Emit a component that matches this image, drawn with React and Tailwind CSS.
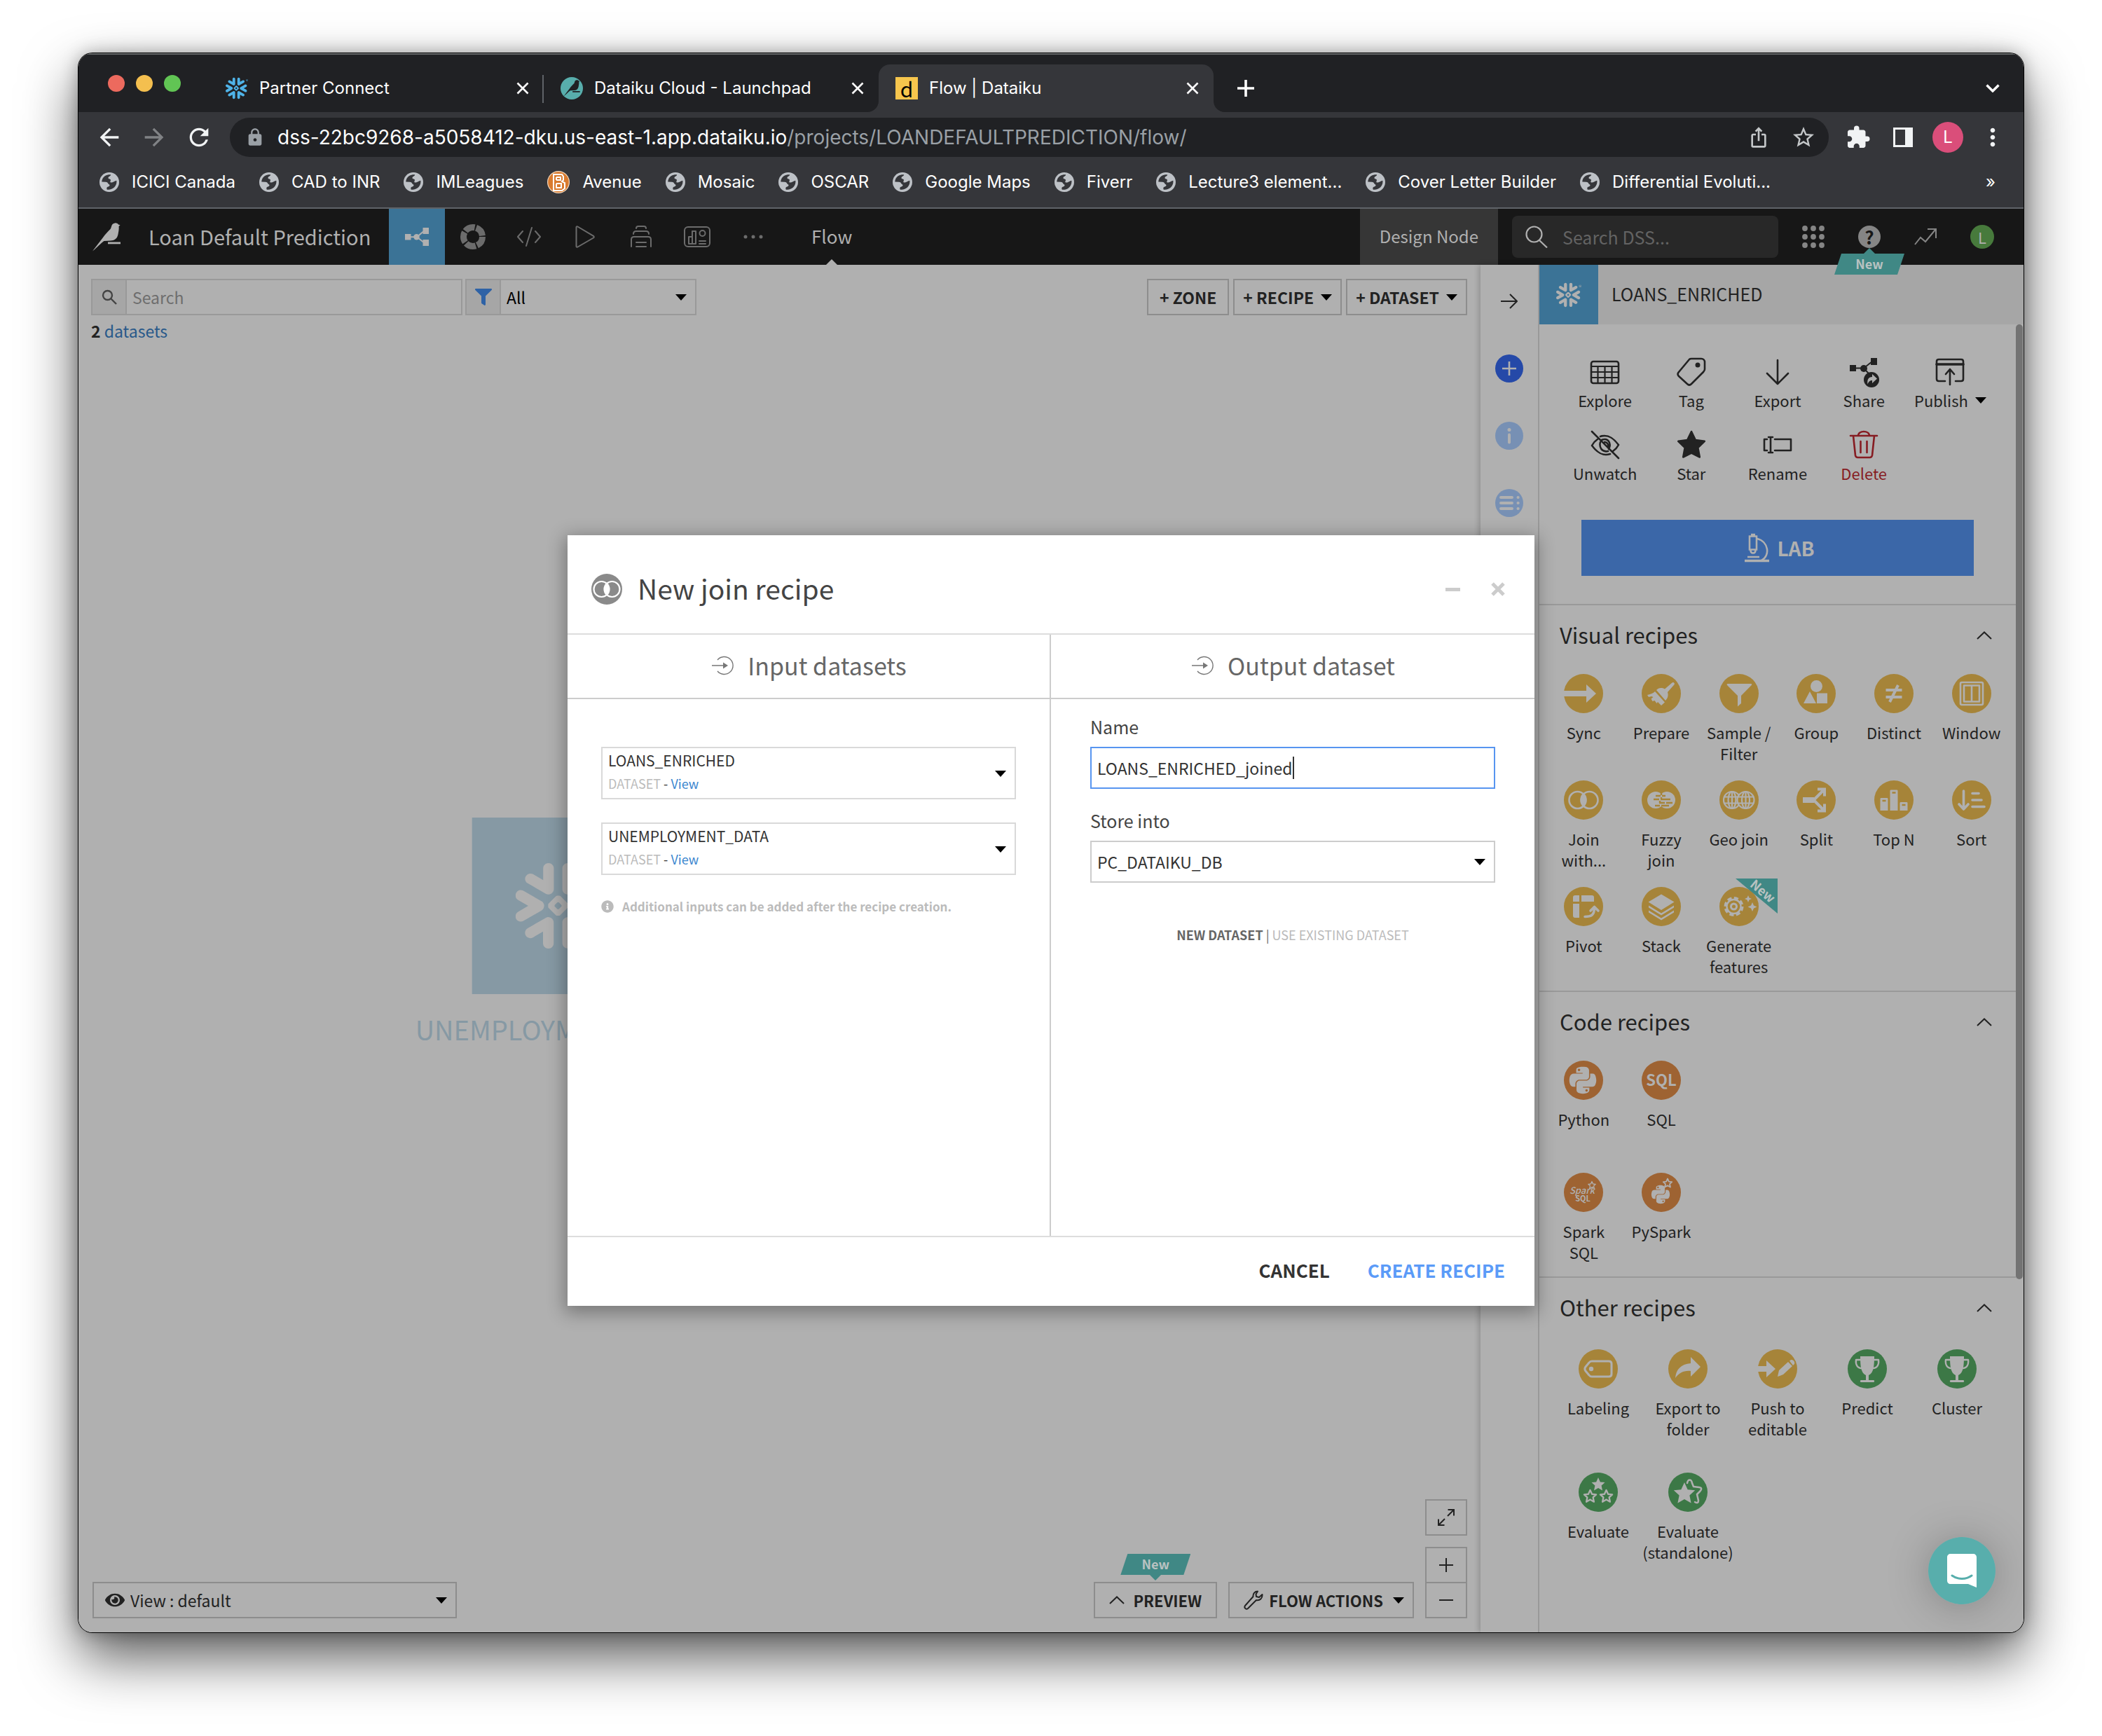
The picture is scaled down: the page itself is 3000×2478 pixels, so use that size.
import React from "react";
import { SiSnowflake } from "react-icons/si";
import { FaPython, FaEye, FaInfoCircle, FaFilter } from "react-icons/fa";
import {
  MdArrowBack,
  MdArrowForward,
  MdRefresh,
  MdLock,
  MdIosShare,
  MdStarBorder,
  MdExtension,
  MdMoreVert,
} from "react-icons/md";

/* ---------- small shared pieces ---------- */

const Caret = ({ className = "" }) => (
  <svg viewBox="0 0 16 9" className={"h-[9px] w-4 shrink-0 fill-black " + className} aria-hidden="true">
    <path d="M0 0h16L8 9z" />
  </svg>
);

const Close = ({ label }) => (
  <button aria-label={label} className="text-white">
    <svg viewBox="0 0 18 18" className="h-[18px] w-[18px]" fill="none" stroke="currentColor" strokeWidth="2.6">
      <path d="M1.5 1.5l15 15M16.5 1.5l-15 15" />
    </svg>
  </button>
);

const Bird = ({ className }) => (
  <svg viewBox="0 0 40 41" className={className} fill="currentColor" aria-hidden="true">
    <path d="M0 40.500L15 21C18 16.500 22 12.500 25.500 9C27.500 6.500 26.500 1 32 .4c2-.2 4 .6 5 2l2.600 .8-2 1.800C38 10 37 13 36.500 16.500C35.500 22.500 31 25.300 26 25.600L16.500 26C12 29 7 35 0 40.500z" />
    <path d="M22 27.500h18v2.800H22z" />
  </svg>
);

const Globe = () => (
  <svg viewBox="0 0 28 28" className="h-7 w-7 shrink-0" aria-hidden="true">
    <circle cx="14" cy="14" r="14" fill="#bdc1c6" />
    <path
      fill="#35363a"
      d="M3.300 13.500C3.500 7 9 2.800 16 3.300c.8 2.200-3.500 2.400-3.500 4.600.2 2 3 1 3.500 3-.2 2-1.500 2.600 0 3.500 3 .5 4.500-1.500 8.300-2.600C25.500 19 19 25.800 10.800 24.700c-1.300-2.700 0-3.700 1.700-4.200 2.500-1 2.500-2.500 1-3.500-1.800-.8-1-3-4.500-3.300z"
    />
  </svg>
);

const Avenue = () => (
  <svg viewBox="0 0 32 32" className="h-8 w-8 shrink-0" aria-hidden="true">
    <circle cx="16" cy="16" r="16" fill="#f3d9bf" />
    <circle cx="16" cy="16" r="14.800" fill="#d97b2f" />
    <path fill="none" stroke="#fff" strokeWidth="2" d="M9 5h12l2 3v5l-2 2 4 2v8l-4 3H9zM13 9h6v4h-6M13 18h7v6h-7v-6M13 9v4" />
  </svg>
);

const Chevron = ({ className = "" }) => (
  <svg viewBox="0 0 22 12" className={"h-3 w-[22px] shrink-0 " + className} fill="none" stroke="currentColor" strokeWidth="2" aria-hidden="true">
    <path d="M1 11L11 1.500 21 11" />
  </svg>
);

const FlowShape = ({ className }) => (
  <svg viewBox="0 0 34 26" className={className} fill="currentColor" stroke="currentColor" aria-hidden="true">
    <path stroke="none" d="M0 9h8.500v8.500H0zM25.500 0H34v9h-8.500zM25.500 17H34v9h-8.500z" />
    <circle cx="16.500" cy="13.200" r="4.200" stroke="none" />
    <path fill="none" strokeWidth="2" d="M8 13.200h9L28 4M17 13.200L28 22" />
  </svg>
);

/* ---------- browser frame ---------- */

const bookmarks = [
  "ICICI Canada",
  "CAD to INR",
  "IMLeagues",
  "Avenue",
  "Mosaic",
  "OSCAR",
  "Google Maps",
  "Fiverr",
  "Lecture3 element...",
  "Cover Letter Builder",
  "Differential Evoluti...",
];

const Tab = ({ icon, title, className = "" }) => (
  <div className={"flex h-[68px] w-[478px] items-center pr-[21px] pl-6 " + className}>
    {icon}
    <span className="ml-4 flex-1 truncate">{title}</span>
    <Close label={"Close " + title} />
  </div>
);

const TabStrip = () => (
  <div className="flex h-[84px] items-end border-t-2 border-[#66696a] bg-[#202124] pr-[34px] pl-[42px] text-[24px] leading-8 text-white">
    <div className="mb-[29px] flex w-[144px] gap-4">
      <span className="h-6 w-6 rounded-full bg-[#ec6a5e]" />
      <span className="h-6 w-6 rounded-full bg-[#f4bf4f]" />
      <span className="h-6 w-6 rounded-full bg-[#61c554]" />
    </div>
    <Tab title="Partner Connect" icon={<SiSnowflake className="h-8 w-8 text-[#4fb3e8]" />} />
    <span className="mb-[13px] -ml-0.5 h-10 w-0.5 bg-[#5f6368]" />
    <Tab
      title="Dataiku Cloud - Launchpad"
      icon={
        <span className="flex h-8 w-8 items-center justify-center rounded-full bg-[#58aeac] text-[#202124]">
          <Bird className="h-6 w-6" />
        </span>
      }
    />
    <div className="relative">
      <svg viewBox="0 0 16 16" className="absolute bottom-0 -left-4 h-4 w-4 fill-[#35363a]" aria-hidden="true">
        <path d="M16 0v16H0A16 16 0 0 0 16 0z" />
      </svg>
      <Tab
        title="Flow | Dataiku"
        className="rounded-t-2xl bg-[#35363a]"
        icon={
          <span className="flex h-8 w-8 items-center justify-center bg-[#f7c64d] font-['Noto_Sans_CJK_SC',sans-serif] text-[30px] leading-8 text-black">
            d
          </span>
        }
      />
      <svg viewBox="0 0 16 16" className="absolute -right-4 bottom-0 h-4 w-4 fill-[#35363a]" aria-hidden="true">
        <path d="M0 0v16h16A16 16 0 0 1 0 0z" />
      </svg>
    </div>
    <button aria-label="New tab" className="mb-[22px] ml-[34px]">
      <svg viewBox="0 0 24 24" className="h-6 w-6" fill="none" stroke="#fff" strokeWidth="3.600">
        <path d="M12 0v24M0 12h24" />
      </svg>
    </button>
    <button aria-label="Search tabs" className="mb-[28px] ml-auto">
      <svg viewBox="0 0 20 12" className="h-3 w-5" fill="none" stroke="#fff" strokeWidth="3.400">
        <path d="M1.500 1.500L10 10l8.500-8.500" />
      </svg>
    </button>
  </div>
);

const AddressBar = () => (
  <div className="flex h-[72px] items-center bg-[#35363a] pr-6 pl-[24px]">
    <button aria-label="Back" className="text-[#f1f3f4]">
      <MdArrowBack className="h-10 w-10" />
    </button>
    <button aria-label="Forward" className="ml-6 text-[#808285]">
      <MdArrowForward className="h-10 w-10" />
    </button>
    <button aria-label="Reload" className="ml-6 text-[#f1f3f4]">
      <MdRefresh className="h-10 w-10" />
    </button>
    <div className="ml-6 flex h-14 flex-1 items-center rounded-full bg-[#202124] pr-[18px] pl-[22px] text-[28px] leading-9 text-white">
      <MdLock className="h-7 w-7 text-[#9aa0a6]" />
      <span className="ml-[18px] flex-1 truncate">
        dss-22bc9268-a5058412-dku.us-east-1.app.dataiku.io
        <span className="text-[#9aa0a6]">/projects/LOANDEFAULTPREDICTION/flow/</span>
      </span>
      <button aria-label="Share page" className="text-[#c4c7c9]">
        <MdIosShare className="h-8 w-8" />
      </button>
      <button aria-label="Bookmark" className="ml-[30px] text-[#c4c7c9]">
        <MdStarBorder className="h-9 w-9" />
      </button>
    </div>
    <button aria-label="Extensions" className="ml-6 text-[#f1f3f4]">
      <MdExtension className="h-9 w-9" />
    </button>
    <button aria-label="Side panel" className="ml-8 h-7 w-7 border-[3px] border-r-[11px] border-[#f1f3f4]" />
    <button className="ml-7 h-11 w-11 rounded-full bg-[#da4e7a] text-[24px] leading-[44px] text-white">L</button>
    <button aria-label="Menu" className="ml-[22px] text-[#f1f3f4]">
      <MdMoreVert className="h-10 w-10" />
    </button>
  </div>
);

const Bookmarks = () => (
  <div className="flex h-[66px] items-center gap-[34px] border-b-2 border-[#5f6368] bg-[#35363a] pr-10 pb-2 pl-[30px] text-[24px] leading-8 text-white">
    {bookmarks.map((name) => (
      <a key={name} href="#bookmark" className="flex shrink-0 items-center gap-[18px]">
        {name === "Avenue" ? <Avenue /> : <Globe />}
        {name}
      </a>
    ))}
    <button aria-label="More bookmarks" className="ml-auto">
      »
    </button>
  </div>
);

/* ---------- application header ---------- */

const NavIcon = ({ label, children }) => (
  <button aria-label={label} className="flex h-20 w-20 items-center justify-center">
    <svg viewBox="0 0 40 40" className="h-10 w-10" fill="none" stroke="#6c6c6c" strokeWidth="2" strokeLinecap="round" strokeLinejoin="round">
      {children}
    </svg>
  </button>
);

const NewBadge = ({ up }) => (
  <span className={"flex items-center " + (up ? "flex-col" : "flex-col-reverse")}>
    <svg viewBox="0 0 16 8" className={"h-2 w-4 fill-[#408885] " + (up ? "" : "rotate-180")} aria-hidden="true">
      <path d="M8 0l8 8H0z" />
    </svg>
    <span className="h-[30px] w-[100px] bg-[#408885] text-center text-[18px] leading-7 font-bold text-[#b9c2c1] [clip-path:polygon(10%_0,100%_0,90%_100%,0_100%)]">
      New
    </span>
  </span>
);

const AppHeader = () => (
  <header className="flex h-20 items-center bg-[#171717] pr-[42px] pl-5 text-[#b0b0b0]">
    <Bird className="h-[41px] w-10" />
    <span className="ml-10 w-[343px] pb-0.5 text-[29px] leading-10">Loan Default Prediction</span>
    <button aria-label="Flow" className="flex h-20 w-20 items-center justify-center bg-[#3b7396]">
      <FlowShape className="h-[26px] w-[34px]" />
    </button>
    <NavIcon label="Lab">
      <circle cx="20" cy="20" r="13.500" strokeWidth="9" strokeLinecap="butt" strokeDasharray="14.960 2" />
    </NavIcon>
    <NavIcon label="Code">
      <path d="M11 12l-7 8 7 8M29 12l7 8-7 8M24 7l-8 26" />
    </NavIcon>
    <NavIcon label="Jobs">
      <path d="M7.500 6.500v27c0 1 1 1.600 2 1L32 21.500c1-.6 1-2 0-2.600L9.500 5.500c-1-.6-2 0-2 1z" />
    </NavIcon>
    <NavIcon label="Scenarios">
      <path d="M6 34V24c0-3 1.500-4 4-4h20c2.500 0 4 1 4 4v10M9 16c0-3 1.500-4 4-4h14c2.500 0 4 1 4 4M13 8c0-2 1-3 3-3h8c2 0 3 1 3 3M13 28h14M13 34h14" />
    </NavIcon>
    <NavIcon label="Dashboards">
      <rect x="2" y="6" width="36" height="28" rx="5" />
      <path d="M8 20h5v10H8zM13 12h5v18h-5zM23 26h9M23 30h9" />
      <circle cx="27.500" cy="15" r="4" />
    </NavIcon>
    <NavIcon label="More">
      <g fill="#6c6c6c" stroke="none">
        <circle cx="9" cy="20" r="2.500" />
        <circle cx="20" cy="20" r="2.500" />
        <circle cx="31" cy="20" r="2.500" />
      </g>
    </NavIcon>
    <a href="#flow" className="ml-[43px] flex h-20 flex-col items-center text-[26px] leading-10">
      <span className="flex-1 pt-[19px]">Flow</span>
      <svg viewBox="0 0 16 8" className="h-2 w-4 fill-[#b0b0b0]" aria-hidden="true">
        <path d="M8 0l8 8H0z" />
      </svg>
    </a>
    <span className="ml-auto h-20 bg-[#363636] px-7 text-[24px] leading-[78px]">Design Node</span>
    <label className="mr-[34px] ml-5 flex h-[60px] w-[380px] items-center rounded-lg bg-[#282828] pl-[19px]">
      <svg viewBox="0 0 32 32" className="h-8 w-8 shrink-0" fill="none" stroke="currentColor" strokeWidth="2.200">
        <circle cx="12.500" cy="12.500" r="11" />
        <path d="M20 21l11 10.500" />
      </svg>
      <input
        aria-label="Search DSS"
        placeholder="Search DSS..."
        className="ml-[21px] w-[280px] bg-transparent text-[25px] leading-10 outline-none placeholder:text-[#636363]"
      />
    </label>
    <div className="flex items-center gap-12 text-[#858585]">
      <button aria-label="Applications">
        <svg viewBox="0 0 32 32" className="h-8 w-8" fill="currentColor">
          {[4, 16, 28].map((y) => [4, 16, 28].map((x) => <circle key={x + "-" + y} cx={x} cy={y} r="3.900" />))}
        </svg>
      </button>
      <div className="relative">
        <button className="block h-8 w-8 rounded-full bg-[#858585] text-center text-[26px] leading-8 font-bold text-[#171717]">?</button>
        <div className="absolute top-full left-1/2 z-10 -translate-x-1/2">
          <NewBadge up />
        </div>
      </div>
      <button aria-label="Activity">
        <svg viewBox="0 0 32 26" className="h-[26px] w-8" fill="none" stroke="currentColor" strokeWidth="2">
          <path d="M1 24l8-10 7 6L30 3M19 2h12v13" />
        </svg>
      </button>
      <button className="h-[34px] w-[34px] rounded-full bg-[#477a3c] text-[22px] leading-[34px] text-[#b0b0b0]">L</button>
    </div>
  </header>
);

/* ---------- flow canvas ---------- */

const boxed = "flex items-center border-2 border-[#8d8d8d] font-bold text-[#222]";

const Canvas = () => (
  <main className="relative flex flex-1 flex-col bg-[#b0b0b0] pt-5 pr-[19px] pb-5 pl-[18px] text-[23px] leading-8 text-[#222]">
    <div className="flex h-[52px] gap-1">
      <label className="flex w-[530px] border-2 border-[#999]">
        <span className="flex w-[49px] items-center justify-center border-r-2 border-[#999] bg-[#a6a6a6]">
          <svg viewBox="0 0 22 22" className="h-[22px] w-[22px]" fill="none" stroke="#444" strokeWidth="2.400">
            <circle cx="8.500" cy="8.500" r="6.500" />
            <path d="M13 13l8 8" />
          </svg>
        </span>
        <input aria-label="Search flow" placeholder="Search" className="flex-1 bg-transparent pl-2 outline-none placeholder:text-[#6e6e6e]" />
      </label>
      <label className="relative flex w-[330px] border-2 border-[#999]">
        <span className="flex w-[49px] items-center justify-center border-r-2 border-[#999] bg-[#a6a6a6]">
          <FaFilter className="h-6 w-6 text-[#2e62a6]" />
        </span>
        <select aria-label="Filter" className="flex-1 appearance-none bg-transparent pl-2 text-black">
          <option>All</option>
        </select>
        <Caret className="pointer-events-none absolute top-5 right-3" />
      </label>
      <div className="ml-auto flex gap-1.5">
        <button className={boxed + " px-4"}>+ ZONE</button>
        <button className={boxed + " gap-2.5 px-3"}>
          + RECIPE <Caret />
        </button>
        <button className={boxed + " gap-2.5 px-3"}>
          + DATASET <Caret />
        </button>
      </div>
    </div>
    <p className="mt-1.5">
      <b>2</b>{" "}
      <a href="#datasets" className="text-[#28598a]">
        datasets
      </a>
    </p>

    <div className="absolute top-[789px] left-[688px] flex -translate-x-1/2 flex-col items-center text-[#8699a4]">
      <div className="flex h-[252px] w-[252px] items-center justify-center bg-[#8699a4]">
        <SiSnowflake className="h-[128px] w-[128px] text-[#b0b0b0]" />
      </div>
      <span className="mt-5 text-[38px] leading-[60px]">UNEMPLOYMENT_DATA</span>
    </div>

    <div className="mt-auto flex items-end">
      <label className="relative ml-0.5 flex h-[52px] w-[520px] items-center border-2 border-[#8d8d8d] pl-4">
        <FaEye className="h-7 w-7" />
        <select aria-label="View" className="flex-1 appearance-none bg-transparent pl-2 text-[#222]">
          <option>View : default</option>
        </select>
        <Caret className="pointer-events-none absolute top-5 right-3" />
      </label>
      <div className="ml-auto flex flex-col items-center">
        <div className="mb-0.5">
          <NewBadge />
        </div>
        <button className={boxed + " h-[52px] gap-3 px-5 text-[22px]"}>
          <Chevron /> PREVIEW
        </button>
      </div>
      <button className={boxed + " ml-4 h-[52px] gap-2 pr-3 pl-5 text-[22px]"}>
        <svg viewBox="0 0 28 28" className="h-7 w-7" fill="none" stroke="currentColor" strokeWidth="2" strokeLinejoin="round">
          <path d="M20 1.500c-4 0-7 3-6.500 7.500L2 22c-2 3 1.500 6 4 4l12-12c5 1 9-2.500 8.500-8l-4.500 4-4-1-.5-3.500z" />
        </svg>
        FLOW ACTIONS <Caret className="ml-1.5" />
      </button>
      <div className="ml-4 flex w-[60px] flex-col">
        <button aria-label="Fit" className={boxed + " mb-4 h-[52px] justify-center"}>
          <svg viewBox="0 0 24 24" className="h-6 w-6" fill="none" stroke="currentColor" strokeWidth="2">
            <path d="M14 10l9-9M14.500 1H23v8.500M10 14l-9 9M9.500 23H1v-8.500" />
          </svg>
        </button>
        <button aria-label="Zoom in" className={boxed + " h-[52px] justify-center"}>
          <svg viewBox="0 0 20 20" className="h-5 w-5" stroke="currentColor" strokeWidth="2">
            <path d="M10 0v20M0 10h20" />
          </svg>
        </button>
        <button aria-label="Zoom out" className={boxed + " -mt-0.5 h-[52px] justify-center"}>
          <svg viewBox="0 0 20 20" className="h-5 w-5" stroke="currentColor" strokeWidth="2">
            <path d="M0 10h20" />
          </svg>
        </button>
      </div>
    </div>
  </main>
);

const SideStrip = () => (
  <nav className="relative flex w-[82px] flex-col items-center bg-[#b0b0b0] pt-[40px] shadow-[-2px_0_8px_rgba(0,0,0,0.2)]">
    <button aria-label="Collapse panel">
      <svg viewBox="0 0 24 24" className="h-6 w-6" fill="none" stroke="#222" strokeWidth="2">
        <path d="M0 12h23M13 2l10 10-10 10" />
      </svg>
    </button>
    <button aria-label="Actions" className="mt-16">
      <svg viewBox="0 0 40 40" className="h-10 w-10" stroke="#b0b0b0" strokeWidth="2.600">
        <circle cx="20" cy="20" r="20" fill="#2549a8" stroke="none" />
        <path d="M20 10v20M10 20h20" />
      </svg>
    </button>
    <button aria-label="Details" className="mt-14">
      <svg viewBox="0 0 40 40" className="h-10 w-10">
        <circle cx="20" cy="20" r="20" fill="#7790b4" />
        <path d="M20 18.500v11" stroke="#b0b0b0" strokeWidth="4" strokeLinecap="round" />
        <circle cx="20" cy="11.500" r="2.500" fill="#b0b0b0" />
      </svg>
    </button>
    <button aria-label="Schema" className="mt-14">
      <svg viewBox="0 0 40 40" className="h-10 w-10" stroke="#b0b0b0" strokeWidth="4" strokeLinecap="round">
        <circle cx="20" cy="20" r="20" fill="#7790b4" stroke="none" />
        <path d="M8 12h16M8 20h16M8 28h16M32.500 12h.2M32.500 20h.2M32.500 28h.2" />
      </svg>
    </button>
  </nav>
);

/* ---------- right panel ---------- */

const Action = ({ label, danger, children, caret }) => (
  <button className={"flex flex-col items-center pb-0.5 " + (danger ? "text-[#861c22]" : "text-[#222]")}>
    <svg viewBox="0 0 48 48" className="h-12 w-12" fill="none" stroke="currentColor" strokeWidth="2.600" strokeLinejoin="round" strokeLinecap="round">
      {children}
    </svg>
    <span className="flex items-center gap-2.5 text-[22px] leading-8">
      {label}
      {caret && <Caret />}
    </span>
  </button>
);

const Recipe = ({ label, color, badge, children }) => (
  <button className="relative flex flex-col items-center pb-0.5">
    <svg viewBox="0 0 56 56" className="h-14 w-14" fill="#b0b0b0" aria-hidden="true">
      <circle cx="28" cy="28" r="28" fill={color} />
      {children}
    </svg>
    <span className="mt-3 text-[22px] leading-[30px] whitespace-pre-line">{label}</span>
    {badge && (
      <span className="absolute -top-3 right-0 flex h-[50px] w-[60px] items-center justify-center bg-[#408885] text-[18px] leading-5 font-bold text-[#b9c2c1] [clip-path:polygon(0_0,100%_0,100%_100%)]">
        <span className="-mt-4 ml-5 rotate-[40deg]">New</span>
      </span>
    )}
  </button>
);

const Section = ({ title, children }) => (
  <section className="border-t-2 border-[#999] pt-3 pb-[18px]">
    <div className="flex h-[62px] items-center justify-between pr-[34px] pl-[29px]">
      <h2 className="pb-0.5 text-[31px] leading-[60px]">{title}</h2>
      <button aria-label={"Collapse " + title}>
        <Chevron />
      </button>
    </div>
    {children}
  </section>
);

const Y = "#a68439";
const O = "#9e6332";
const G = "#3c7846";
const BG = "#b0b0b0";
const line = { fill: "none", stroke: BG, strokeLinejoin: "round", strokeLinecap: "round" };
const star = "M0-10L2.900-3.600 9.500-3 4.600 1.600 6 8.500 0 5-6 8.500-4.600 1.600-9.500-3-2.900-3.600z";

const MiniGlobe = ({ x }) => (
  <g {...line} fill={Y} strokeWidth="2.200">
    <circle cx={x} cy="28" r="12" />
    <ellipse cx={x} cy="28" rx="5.500" ry="12" />
    <path d={`M${x - 11} 23.500h22M${x - 11} 32.500h22M${x} 16v24`} />
  </g>
);

const Trophy = () => (
  <g>
    <path d="M18 10h20c0 14-1 24-8 27v7h7c1.500 0 1.500 3 0 3H19c-1.500 0-1.500-3 0-3h7v-7c-7-3-8-13-8-27z" />
    <path {...line} strokeWidth="2.400" d="M18 15h-6c-1 7 2 12 8 12M38 15h6c1 7-2 12-8 12" />
  </g>
);

const RightPanel = () => (
  <aside className="relative flex w-[693px] flex-col border-l-2 border-[#999] bg-[#b0b0b0] text-[#222]">
    <div className="flex h-[85px] items-center bg-[#a6a6a6]">
      <span className="flex h-[85px] w-[84px] items-center justify-center bg-[#3b7396]">
        <SiSnowflake className="h-9 w-9 text-[#b0b0b0]" />
      </span>
      <span className="ml-[19px] pb-1 text-[25px] leading-10">LOANS_ENRICHED</span>
    </div>
    <div className="flex flex-1">
      <div className="flex-1">
        <div className="grid grid-cols-5 gap-y-[22px] px-8 pt-11">
          <Action label="Explore">
            <rect x="4" y="9" width="39" height="31" rx="3" />
            <path d="M4 16h39M4 24h39M4 32h39M13.500 16v24M23.500 16v24M33.500 16v24" strokeWidth="2.200" />
          </Action>
          <Action label="Tag">
            <path d="M24 5h14c3 0 5 2 5 5v10c0 2-1 3-2 4L24 41c-2 2-4 2-6 0L6 30c-2-2-2-4 0-6L21 6c1-1 2-1 3-1z" />
            <circle cx="33" cy="14" r="2.200" fill="currentColor" />
          </Action>
          <Action label="Export">
            <path d="M24 7v34M9 26l15 15 15-15" />
          </Action>
          <Action label="Share">
            <path fill="currentColor" stroke="none" d="M4 14h9v9H4zM34 4h9v10h-9z" />
            <circle cx="24" cy="19" r="5" fill="currentColor" stroke="none" />
            <path strokeWidth="2" d="M12 18.500h12L36 9M24 19l6 6" />
            <circle cx="35" cy="35" r="11" fill="currentColor" stroke="none" />
            <path fill="#b0b0b0" stroke="none" d="M36 27l7 6.500-7 6.500v-4c-3 0-5 1.500-6.500 5.500-1-7 1.500-10.500 6.500-10.500z" />
          </Action>
          <Action label="Publish" caret>
            <path d="M17 37H8c-2 0-3-1-3-3V9c0-2 1-3 3-3h32c2 0 3 1 3 3v25c0 2-1 3-3 3h-8M24 42V20M18 27l6-7 6 7" />
            <path strokeWidth="3.600" d="M5 13h38" />
          </Action>
          <Action label="Unwatch">
            <path d="M5 5l38 38M17 12c12-4 20 4 26 12-2 4-5 7-8 9M31 37c-12 4-20-4-26-12 2-4 5-7 8-9M19 17c10-4 14 6 10 13M28 33c-9 2-13-6-11-13M23 20c4 0 6 4 5 7" />
          </Action>
          <Action label="Star">
            <path fill="currentColor" d="M24 5l5.800 12 13 1.800-9.500 9.200 2.500 13.500L24 35.500 12.200 41.500 14.700 28 5.200 18.800l13-1.800z" />
          </Action>
          <Action label="Rename">
            <path d="M9 16H5v16h4M14 13v22M11 13h6M11 35h6M20 16h23v16H20" />
          </Action>
          <Action label="Delete" danger>
            <path d="M5 11h38M16 11c0-8 16-8 16 0M9 11l3 28c.4 2 1.500 3 3.500 3h17c2 0 3-1 3.500-3l3-28M19.500 19v16M28.500 19v16" />
          </Action>
        </div>
        <div className="px-[60px] pt-[49px] pb-10">
          <button className="flex h-20 w-full items-center justify-center gap-2.5 bg-[#3b67a8] pl-1 text-[28px] leading-10 font-bold text-[#b0b0b0]">
            <svg viewBox="0 0 38 42" className="h-[42px] w-[38px]" fill="none" stroke="currentColor" strokeWidth="2.600">
              <path d="M9 4.500h10v19H9zM11 2h6M10.500 24c0 6 7 6 7 0M20 8c16 4 19 24 6 31M6 34h17" />
              <path strokeWidth="3.600" d="M2 39.500h35" />
            </svg>
            LAB
          </button>
        </div>

        <Section title="Visual recipes">
          <div className="mt-6 grid grid-cols-6 gap-y-[22px] px-2">
            <Recipe label="Sync" color={Y}>
              <path d="M0 24h32v-9l14 13-14 13v-9H0z" />
            </Recipe>
            <Recipe label="Prepare" color={Y}>
              <path d="M43.500 12.500c1.500-1.700 4.500.8 3 2.700L37 26c1.500 5 0 9-3 12L21 23c3-3 7-4 12-1.500zM19 25l14 15.500-5 4.500-5-5-1.500 2-3-4-3 1-2-3.500 3-2.500-2.500-1-4 1-2-3c4-1 8-2 11-5z" />
            </Recipe>
            <Recipe label={"Sample /\nFilter"} color={Y}>
              <path d="M12 14h33c1.500 0 1.500 1 .8 2L31 31v11l-5 4.500V31L11 16c-.8-1-.5-2 1-2z" />
            </Recipe>
            <Recipe label="Group" color={Y}>
              <circle cx="28.500" cy="17.500" r="8.500" />
              <path d="M19 25l9 17H10zM29 27.500h15V42H29z" />
            </Recipe>
            <Recipe label="Distinct" color={Y}>
              <path {...line} strokeWidth="4" strokeLinecap="butt" d="M16.500 23h23M16.500 33h23M34 16l-12 24" />
            </Recipe>
            <Recipe label="Window" color={Y}>
              <g {...line} strokeWidth="2.600">
                <rect x="12" y="12" width="32" height="32" rx="2" />
                <path d="M17 16.500h22v23H17zM28 16.500v23" />
              </g>
            </Recipe>
            <Recipe label={"Join\nwith..."} color={Y}>
              <g {...line} strokeWidth="2.600">
                <circle cx="19.500" cy="28" r="12" />
                <circle cx="36.500" cy="28" r="12" />
                <path fill={BG} d="M28 19.500c4 5 4 12 0 17-4-5-4-12 0-17z" />
              </g>
            </Recipe>
            <Recipe label={"Fuzzy\njoin"} color={Y}>
              <circle cx="20" cy="28" r="12" />
              <circle cx="36" cy="28" r="12" />
              <path fill="none" stroke={Y} strokeWidth="2.400" d="M20 22h7M29 22h5M17 27h8M27 27h14M25 32h8M35 32h9M19 36h7M28 36h11M28 18v3M28 24v2M26 29v3" />
            </Recipe>
            <Recipe label="Geo join" color={Y}>
              <MiniGlobe x={18} />
              <MiniGlobe x={37.500} />
            </Recipe>
            <Recipe label="Split" color={Y}>
              <path d="M9 24h16v8H9z" />
              <path {...line} strokeWidth="4" strokeLinejoin="miter" strokeLinecap="butt" d="M23 29.500L39 13.500M23 26.500L39 42.500M30 12.500h10v10M30 43.500h10v-10" />
            </Recipe>
            <Recipe label="Top N" color={Y}>
              <path d="M10 25h8c1 0 1.500.5 1.500 1.500V43H8.500V26.500c0-1 .5-1.500 1.500-1.500zM24 13.500h8c1 0 1.500.5 1.500 1.500v28h-11V15c0-1 .5-1.500 1.500-1.500zM38 31h8c1 0 1.500.5 1.500 1.500V43h-11V32.500c0-1 .5-1.500 1.500-1.500z" />
              <path fill="none" stroke={Y} strokeWidth="2.500" d="M11.500 29h5M25.500 17.500h5M39.500 35h5" />
            </Recipe>
            <Recipe label="Sort" color={Y}>
              <path {...line} strokeWidth="3.600" d="M16.500 15v25M10 34l6.500 7 6.500-7M29 18.500h9M29 28h13M29 37.500h17" />
            </Recipe>
            <Recipe label="Pivot" color={Y}>
              <path d="M16 12h6v9h-9v-6c0-2 1-3 3-3zM25 12h15c2 0 3 1 3 3v6H25zM13 24h9v20h-6c-2 0-3-1-3-3z" />
              <path {...line} strokeWidth="3.600" d="M30 42.500c9 0 13.500-2 13.500-13M38 34l5.500-5.500L49 34" />
            </Recipe>
            <Recipe label="Stack" color={Y}>
              <path d="M28 10.500l18.500 11L28 33 9.500 21.500zM10 26.500l18 11 18-11v3L28 40.500 10 29.500zM10 33.500l18 11 18-11v3L28 47.500 10 36.500z" />
            </Recipe>
            <Recipe label={"Generate\nfeatures"} color={Y} badge>
              <g {...line}>
                <circle cx="20.500" cy="28" r="12" strokeWidth="4" strokeDasharray="6 3.420" strokeLinecap="butt" />
                <circle cx="20.500" cy="28" r="10" strokeWidth="2.400" fill={Y} />
                <circle cx="20.500" cy="28" r="4" strokeWidth="3" />
              </g>
              <path d="M41 12l1.500 3.500L46 17l-3.500 1.500L41 22l-1.500-3.500L36 17l3.500-1.500zM47 22l2 4.500 4.500 2-4.500 2-2 4.500-2-4.500-4.500-2 4.500-2z" />
            </Recipe>
          </div>
        </Section>

        <Section title="Code recipes">
          <div className="mt-6 grid grid-cols-6 gap-y-[60px] px-2">
            <Recipe label="Python" color={O}>
              <FaPython x="5" y="6" size={44} fill={BG} />
            </Recipe>
            <Recipe label="SQL" color={O}>
              <text x="28" y="35.500" textAnchor="middle" fontSize="22" fontWeight="700">
                SQL
              </text>
            </Recipe>
            <div className="col-span-4" />
            <Recipe label={"Spark\nSQL"} color={O}>
              <text x="26" y="29.500" textAnchor="middle" fontSize="13" fontStyle="italic" fontWeight="500">
                Spark
              </text>
              <text x="27" y="40.500" textAnchor="middle" fontSize="11" fontWeight="700">
                SQL
              </text>
              <path {...line} strokeWidth="2.400" transform="translate(40 18) scale(.55)" d={star} />
            </Recipe>
            <Recipe label="PySpark" color={O}>
              <FaPython x="12" y="16" size={30} fill={BG} />
              <path {...line} strokeWidth="2.800" transform="translate(37 15) scale(.65)" d={star} />
            </Recipe>
          </div>
        </Section>

        <Section title="Other recipes">
          <div className="mt-7 grid auto-rows-[154px] grid-cols-5 gap-y-[22px] px-5">
            <Recipe label="Labeling" color={Y}>
              <path {...line} strokeWidth="3" d="M19 17h24c2.500 0 4 1 4 3.500v15c0 2.500-1.500 3.500-4 3.500H19c-2 0-3-.5-4-2l-5-6c-1.500-2-1.500-4 0-6l5-6c1-1.500 2-2 4-2z" />
              <circle cx="18" cy="28" r="3.200" />
            </Recipe>
            <Recipe label={"Export to\nfolder"} color={Y}>
              <path d="M32 11l14 14-14 14v-8c-10-1-17 3-22 10 1-12 8-20 22-21z" />
            </Recipe>
            <Recipe label={"Push to\neditable"} color={Y}>
              <path d="M0 24h12v-8l13 12-13 12v-8H0zM28 39l2-9 13-12 6 6-13 12zM45 16.500l2-1.500c4 0 6 3 5 6l-2 2z" />
            </Recipe>
            <Recipe label="Predict" color={G}>
              <Trophy />
            </Recipe>
            <Recipe label="Cluster" color={G}>
              <Trophy />
            </Recipe>
            <Recipe label="Evaluate" color={G}>
              <path transform="translate(28 17)" d={star} />
              <path {...line} strokeWidth="2.600" transform="translate(16.500 34) scale(.9)" d={star} />
              <path {...line} strokeWidth="2.600" transform="translate(39.500 34) scale(.9)" d={star} />
            </Recipe>
            <Recipe label={"Evaluate\n(standalone)"} color={G}>
              <path {...line} strokeWidth="2.600" d="M27 15c1-6 6-6 7 0l2 5 8 1c4 .500 4 3 1 6l-4 4 2 9c0 3-2 4-5 2" />
              <path transform="translate(23 30) scale(1.600)" d={star} />
            </Recipe>
          </div>
        </Section>
      </div>
      <div className="w-[11px] pr-px">
        <div className="h-[73%] rounded-full bg-[#737373]" />
      </div>
    </div>
  </aside>
);

/* ---------- join recipe dialog ---------- */

const InArrow = () => (
  <svg viewBox="0 0 32 28" className="h-7 w-8" fill="none" stroke="#777" strokeWidth="1.400" aria-hidden="true">
    <path d="M8 6a12.500 12.500 0 1 1 0 16M0 14h18" />
    <path fill="#777" stroke="none" d="M16 9.500l7 4.500-7 4.500z" />
  </svg>
);

const ColumnTitle = ({ children }) => (
  <h3 className="flex h-[92px] items-center justify-center gap-[19px] border-b-2 border-[#ccc] pb-0.5 pl-0.5 text-[34px] leading-[60px] text-[#666]">
    <InArrow />
    {children}
  </h3>
);

const InputDataset = ({ name }) => (
  <div className="relative border-2 border-[#d9d9d9] px-2 pb-[5px]">
    <select aria-label={"Input dataset " + name} className="block w-full appearance-none bg-transparent text-[21px] leading-[34px] text-[#333]">
      <option>{name}</option>
    </select>
    <p className="text-[18px] leading-8 text-[#333]">
      <span className="text-[#bbb]">DATASET</span> -{" "}
      <a href="#view" className="text-[#3b87cf]">
        View
      </a>
    </p>
    <Caret className="pointer-events-none absolute top-8 right-3" />
  </div>
);

const JoinDialog = () => (
  <div className="absolute inset-0 z-20 flex items-center justify-center">
    <div
      role="dialog"
      aria-label="New join recipe"
      className="flex h-[1100px] w-[1380px] max-w-full flex-col bg-white shadow-[0_6px_24px_4px_rgba(0,0,0,0.32)]"
    >
      <div className="flex h-[142px] items-center border-b-2 border-[#ddd] pt-3.5 pr-[42px] pl-[34px]">
        <svg viewBox="0 0 44 44" className="h-11 w-11" fill="none" stroke="#fff" strokeWidth="2.200" aria-hidden="true">
          <circle cx="22" cy="22" r="22" fill="#8a8a8a" stroke="none" />
          <circle cx="14.500" cy="22" r="11" />
          <circle cx="29.500" cy="22" r="11" />
          <path fill="#fff" d="M22 15c3 4 3 10 0 14-3-4-3-10 0-14z" />
        </svg>
        <h2 className="ml-[22px] flex-1 pb-1 text-[39px] leading-[60px] text-[#444]">New join recipe</h2>
        <button aria-label="Minimize" className="mr-[44px]">
          <span className="block h-[5px] w-[21px] bg-[#ccc]" />
        </button>
        <button aria-label="Close dialog">
          <svg viewBox="0 0 20 20" className="h-5 w-5" stroke="#ccc" strokeWidth="5">
            <path d="M2 2l16 16M18 2L2 18" />
          </svg>
        </button>
      </div>
      <div className="grid flex-1 grid-cols-2">
        <div className="border-r-2 border-[#ccc]">
          <ColumnTitle>Input datasets</ColumnTitle>
          <div className="flex flex-col gap-[33px] px-12 pt-[68px]">
            <InputDataset name="LOANS_ENRICHED" />
            <InputDataset name="UNEMPLOYMENT_DATA" />
          </div>
          <p className="mt-[29px] flex items-center gap-3 px-12 text-[17px] leading-8 font-bold text-[#bbb]">
            <FaInfoCircle className="h-[18px] w-[18px]" />
            Additional inputs can be added after the recipe creation.
          </p>
        </div>
        <div>
          <ColumnTitle>Output dataset</ColumnTitle>
          <div className="px-14 pt-[19px] text-[25px] leading-10 text-[#444]">
            <label htmlFor="dataset-name" className="block">
              Name
            </label>
            <div className="mt-[9px] flex h-[60px] items-center border-2 border-[#5795f0] pl-2">
              <input
                id="dataset-name"
                defaultValue="LOANS_ENRICHED_joined"
                className="[field-sizing:content] bg-transparent text-[23px] leading-8 text-[#333] outline-none"
              />
              <span className="h-8 w-0.5 bg-[#333]" />
            </div>
            <label htmlFor="dataset-store" className="mt-[25px] block">
              Store into
            </label>
            <div className="relative mt-[9px] flex h-[60px] border-2 border-[#ccc]">
              <select id="dataset-store" className="flex-1 appearance-none bg-transparent pl-2 text-[23px] leading-8 text-[#333]">
                <option>PC_DATAIKU_DB</option>
              </select>
              <Caret className="pointer-events-none absolute top-6 right-3" />
            </div>
            <p className="mt-[58px] flex items-center justify-center gap-1 text-[18px] leading-8 text-[#666]">
              <button className="font-bold">NEW DATASET</button>
              <span>|</span>
              <button className="text-[#bbb]">USE EXISTING DATASET</button>
            </p>
          </div>
        </div>
      </div>
      <div className="flex h-[100px] items-center justify-end gap-[54px] border-t-2 border-[#ddd] pr-[42px] pb-1 text-[26px] leading-10 font-bold">
        <button className="text-[#333]">CANCEL</button>
        <button className="text-[#5b9bf8]">CREATE RECIPE</button>
      </div>
    </div>
  </div>
);

export default function App() {
  return (
    <div className="flex min-h-screen flex-col bg-white px-[112px] pt-[76px] pb-[148px]">
      <div className="flex flex-1 flex-col overflow-hidden rounded-[20px] font-['Inter',sans-serif] shadow-[0_0_0_1px_#000,0_36px_80px_rgba(0,0,0,0.65),0_0_24px_rgba(0,0,0,0.3)]">
        <TabStrip />
        <AddressBar />
        <Bookmarks />
        <div className="relative flex flex-1 flex-col font-['Noto_Sans_CJK_SC','Noto_Sans',sans-serif]">
          <AppHeader />
          <div className="flex flex-1">
            <Canvas />
            <SideStrip />
            <RightPanel />
          </div>
          <JoinDialog />
          <button aria-label="Open chat" className="absolute right-10 bottom-10 z-30 rounded-full shadow-[0_4px_60px_rgba(0,0,0,0.25)]">
            <svg viewBox="0 0 96 96" className="h-24 w-24">
              <circle cx="48" cy="48" r="48" fill="#58aeac" />
              <path fill="#fff" d="M32 24h32c3 0 5 2 5 5v43l-12-5H32c-3 0-5-2-5-5V29c0-3 2-5 5-5z" />
              <path fill="none" stroke="#58aeac" strokeWidth="3" strokeLinecap="round" d="M34 55c8 6 20 6 28 0" />
            </svg>
          </button>
        </div>
      </div>
    </div>
  );
}
